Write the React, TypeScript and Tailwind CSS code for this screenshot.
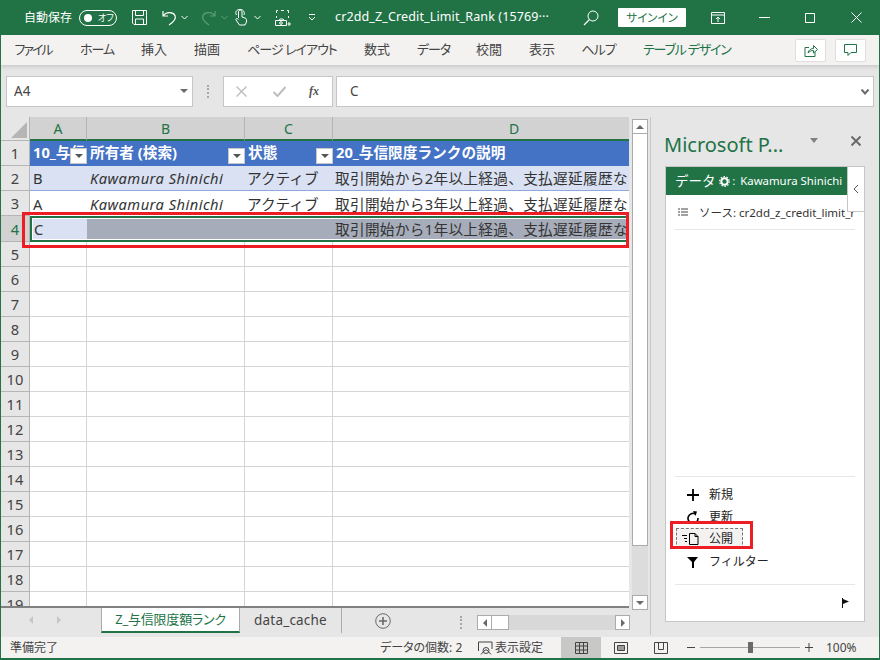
import React from "react";

const jp = "font-['Noto_Sans','Noto_Sans_CJK_JP',sans-serif]";
const palt = "[font-feature-settings:'palt']";

function Ico({ w = 16, h = 16, vb, className = "", children }: { w?: number; h?: number; vb?: string; className?: string; children: React.ReactNode }) {
  return (
    <svg width={w} height={h} viewBox={vb ?? `0 0 ${w} ${h}`} fill="none" stroke="currentColor" strokeWidth={1} className={`shrink-0 ${className}`}>
      {children}
    </svg>
  );
}

const Chev = ({ className = "" }: { className?: string }) => (
  <Ico w={7} h={5} className={className}>
    <path d="M0.5 1 L3.5 4 L6.5 1" />
  </Ico>
);

function TitleBar() {
  return (
    <div className="h-[35px] bg-[#217346] text-white flex items-center shrink-0 text-[12px]">
      <span className="ml-[24px] w-[48px] whitespace-nowrap">自動保存</span>
      <div className="ml-[7px] w-[38px] h-[16px] rounded-full border border-white flex items-center">
        <span className="ml-[4px] w-[8px] h-[8px] rounded-full bg-white" />
        <span className={`ml-[6px] text-[9px] leading-none whitespace-nowrap ${palt}`}>オフ</span>
      </div>
      <Ico w={17} h={17} className="ml-[14px]">
        <path d="M1.5 1.5 H15.5 V15.5 H3 L1.5 14 Z M4.5 1.5 V6.5 H12.5 V1.5 M4.5 15.5 V10 H12.5 V15.5" />
      </Ico>
      <Ico w={17} h={17} className="ml-[13px]">
        <path d="M2 2 V7 H7 M2 7 C5 2.5 12 2.5 14 6.5 C15.5 10 12.5 13 8 16" strokeWidth={1.2} />
      </Ico>
      <Chev className="ml-[3px]" />
      <Ico w={17} h={17} className="ml-[12px] text-[#5c9d7d]">
        <path d="M15 2 V7 H10 M15 7 C12 2.5 5 2.5 3 6.5 C1.5 10 4.5 13 9 16" strokeWidth={1.2} />
      </Ico>
      <Chev className="ml-[4px] text-[#5c9d7d]" />
      <Ico w={13} h={17} className="ml-[6px]">
        <path d="M4.5 9 V3 C4.5 0.5 8 0.5 8 3 V8 L11 9 C12.5 9.5 12.5 10.5 12.5 12 V13 L11 16 H5.5 L2 11 C1.5 9.5 3 9 4.5 10.5 M2.5 6 C0.5 2.5 3 0.5 6 0.5 C9 0.5 11 2.5 10 6" />
      </Ico>
      <Chev className="ml-[7px]" />
      <Ico w={17} h={18} className="ml-[13px]">
        <path d="M4 1.5 H2.5 V4 M7 1.5 H10 M13 1.5 H14.5 V4 M14.5 7 V9 M2.5 7 V9 M1.5 11.5 H12.5 V16.5 H1.5 Z M5 11.5 L6 10 H9 L10 11.5 M13.5 15 H17 M15 13 V17" />
        <circle cx="7" cy="14" r="1.3" />
      </Ico>
      <Ico w={8} h={7} className="ml-[17px]">
        <path d="M1 0.5 H7 M1 3 L4 6 L7 3" />
      </Ico>
      <span className={`ml-[19px] w-[219px] whitespace-nowrap text-[12.5px] tracking-[0.13px] ${jp}`}>cr2dd_Z_Credit_Limit_Rank (15769···</span>
      <Ico w={16} h={16} className="ml-[29px]">
        <circle cx="10" cy="6" r="5" />
        <path d="M6.5 9.5 L1 15" strokeWidth={1.3} />
      </Ico>
      <div className={`ml-[19px] w-[68px] h-[19px] bg-white text-[#217346] rounded-[1px] flex items-center justify-center text-[11.5px] ${palt}`}>サインイン</div>
      <Ico w={14} h={12} className="ml-[25px]">
        <path d="M0.5 0.5 H13.5 V11.5 H0.5 Z M0.5 3 H13.5 M7 10 V5 M5 7 L7 5 L9 7" />
      </Ico>
      <Ico w={11} h={1} className="ml-[34px]">
        <path d="M0 0.5 H11" />
      </Ico>
      <Ico w={10} h={10} className="ml-[35px]">
        <path d="M0.5 0.5 H9.5 V9.5 H0.5 Z" />
      </Ico>
      <Ico w={11} h={11} className="ml-[36px]">
        <path d="M0.5 0.5 L10.5 10.5 M10.5 0.5 L0.5 10.5" />
      </Ico>
    </div>
  );
}

function RibbonTabs() {
  const tabs: [string, number, number, string][] = [
    ["ファイル", 14, 38, "tracking-[-2px]"],
    ["ホーム", 80, 34, "tracking-[-1px]"],
    ["挿入", 141, 26, ""],
    ["描画", 194, 26, ""],
    ["ページ レイアウト", 249, 86, "tracking-[-1px]"],
    ["数式", 364, 26, ""],
    ["データ", 417, 33, "tracking-[-1px]"],
    ["校閲", 476, 26, ""],
    ["表示", 529, 26, ""],
    ["ヘルプ", 582, 33, "tracking-[-1px]"],
  ];
  let x = 0;
  return (
    <div className={`h-[30px] bg-[#f3f2f1] flex items-center shrink-0 text-[13px] text-[#444444] shadow-[0_2px_4px_rgba(0,0,0,0.12)] relative z-10 ${palt}`}>
      {tabs.map(([t, l, w, tr]) => {
        const m = l - x;
        x = l + w;
        return (
          <span key={t} className={`whitespace-nowrap flex justify-center ${tr}`} style={{ marginLeft: m, width: w }}>
            {t}
          </span>
        );
      })}
      <span className="ml-[28px] w-[88px] whitespace-nowrap text-[#217346] tracking-[-1.2px]">テーブル デザイン</span>
      <div className="ml-[64px] w-[31px] h-[23px] bg-white border border-[#e1dfdd] rounded-[2px] flex items-center justify-center text-[#217346]">
        <Ico w={14} h={13}>
          <path d="M5 3.5 H1 V12.5 H11 V8 M4 9 C4.5 6 7 4.5 9.5 4.5 V1.5 L13.5 5.5 L9.5 9 V6.5 C7 6.5 5.5 7.5 4 9 Z" />
        </Ico>
      </div>
      <div className="ml-[9px] w-[31px] h-[23px] bg-white border border-[#e1dfdd] rounded-[2px] flex items-center justify-center text-[#217346]">
        <Ico w={13} h={12}>
          <path d="M0.5 0.5 H12.5 V8.5 H7 L4 11.5 V8.5 H0.5 Z" />
        </Ico>
      </div>
    </div>
  );
}

function FormulaBar() {
  return (
    <div className="h-[52px] flex shrink-0 items-start pt-[11px] pl-[5px] bg-[#e6e6e6]">
      <div className="w-[187px] h-[31px] bg-white border border-[#c6c6c6] flex items-center pl-[7px] text-[13.5px] text-[#444444] relative">
        A4
        <span className="absolute right-[4px] top-[12px] w-0 h-0 border-x-[4px] border-x-transparent border-t-[4px] border-t-[#6a6a6a]" />
      </div>
      <div className="w-[2px] h-[13px] mt-[9px] ml-[14px] border-l-2 border-dotted border-[#a6a6a6]" />
      <div className="ml-[14px] w-[110px] h-[31px] bg-white border border-[#c6c6c6] flex items-center text-[#bdbdbd]">
        <Ico w={11} h={11} className="ml-[12px]">
          <path d="M0.5 0.5 L10.5 10.5 M10.5 0.5 L0.5 10.5" strokeWidth={1.4} />
        </Ico>
        <Ico w={13} h={11} className="ml-[26px]">
          <path d="M0.5 6 L4.5 10 L12.5 1" strokeWidth={2} />
        </Ico>
        <span className="ml-[23px] -mt-[2px] text-[#555555] italic font-bold text-[12px] font-['Liberation_Serif',serif] leading-none">fx</span>
      </div>
      <div className="ml-[3px] w-[538px] h-[31px] bg-white border border-[#c6c6c6] flex items-center pl-[13px] text-[13.5px] text-[#444444] relative">
        C
        <Ico w={8} h={6} className="absolute right-[4px] top-[12px] text-[#6a6a6a]">
          <path d="M0.5 0.5 L4 4.5 L7.5 0.5" strokeWidth={2} />
        </Ico>
      </div>
    </div>
  );
}

const colW = ["w-[57px]", "w-[158px]", "w-[88px]", "w-[363px]"];
const colHead = ["A", "B", "C", "D"];

function Filter() {
  return (
    <span className="absolute right-[0px] bottom-[2px] w-[17px] h-[16px] bg-white border border-[#c6c6c6] flex items-center justify-center">
      <span className="w-0 h-0 border-x-[4px] border-x-transparent border-t-[4px] border-t-[#555555]" />
    </span>
  );
}

function Cell({ i, className = "", children, filter }: { i: number; className?: string; children?: React.ReactNode; filter?: boolean }) {
  return (
    <div className={`${colW[i]} shrink-0 h-full relative overflow-hidden whitespace-nowrap flex items-center pl-[3px] ${className}`}>
      {children}
      {filter && <Filter />}
    </div>
  );
}

function RowHead({ n, active }: { n: number; active?: boolean }) {
  return (
    <div className={`w-[29px] shrink-0 h-full flex items-center justify-center border-b border-r border-[#b5b5b5] text-[14.67px] ${active ? "bg-[#d2d2d2] text-[#217346]" : "bg-[#e6e6e6] text-[#444444]"}`}>
      {n}
    </div>
  );
}

const line = "border-r border-b border-[#d4d4d4]";
const desc = (n: number) => `取引開始から${n}年以上経過、支払遅延履歴なし`;
const Owner = () => <span className="italic tracking-[0.47px]">Kawamura Shinichi</span>;
const Desc = ({ n }: { n: number }) => <span className="tracking-[0.3px] -ml-px">{desc(n)}</span>;
const Status = () => <span className="-ml-px">アクティブ</span>;
const Head = ({ children }: { children: React.ReactNode }) => <span className="-mt-[3px]">{children}</span>;

function Sheet() {
  const empties = [5, 6, 7, 8, 9, 10, 11, 12, 13, 14, 15, 16, 17, 18, 19];
  return (
    <div className={`w-[628px] h-[491px] overflow-hidden shrink-0 border-b-2 border-[#808080] relative text-[14.67px] text-[#333333] ${jp}`}>
      <div className="h-[24px] flex">
        <div className="w-[29px] shrink-0 bg-[#e6e6e6] border-r border-b border-[#b5b5b5] flex items-end justify-end p-[2px]">
          <Ico w={16} h={16} className="text-[#b5b5b5]">
            <path d="M16 0 V16 H0 Z" fill="currentColor" stroke="none" />
          </Ico>
        </div>
        {colHead.map((c, i) => (
          <div key={c} className={`${colW[i]} shrink-0 bg-[#d2d2d2] border-r border-[#b5b5b5] border-b-2 border-b-[#217346] flex items-center justify-center text-[#217346] text-[14px]`}>
            {c}
          </div>
        ))}
      </div>
      <div className="h-[25px] flex">
        <RowHead n={1} />
        <div className="flex h-full bg-[#4472c4] text-white font-bold">
          <Cell i={0} filter><Head>10_与信</Head></Cell>
          <Cell i={1} filter><Head>所有者 (検索)</Head></Cell>
          <Cell i={2} filter><Head>状態</Head></Cell>
          <Cell i={3}><Head>20_与信限度ランクの説明</Head></Cell>
        </div>
      </div>
      <div className="h-[25px] flex">
        <RowHead n={2} />
        <div className="flex h-full bg-[#d9e1f2] border-b border-[#8ea9db]">
          <Cell i={0}>B</Cell>
          <Cell i={1}><Owner /></Cell>
          <Cell i={2}><Status /></Cell>
          <Cell i={3}><Desc n={2} /></Cell>
        </div>
      </div>
      <div className="h-[25px] flex">
        <RowHead n={3} />
        <div className="flex h-full bg-white">
          <Cell i={0}>A</Cell>
          <Cell i={1}><Owner /></Cell>
          <Cell i={2}><Status /></Cell>
          <Cell i={3}><Desc n={3} /></Cell>
        </div>
      </div>
      <div className="h-[26px] flex">
        <RowHead n={4} active />
        <div className="flex h-full bg-white border-2 border-[#217346] p-[1px] w-[640px] shrink-0">
          <div className="flex h-full w-full overflow-hidden bg-[#a6acb9]">
            <div className="w-[54px] shrink-0 bg-[#d9e1f2] flex items-center pl-[1px] -mt-px">C</div>
            <div className="w-[246px] shrink-0" />
            <div className="flex-1 whitespace-nowrap flex items-center pl-[3px] -mt-px"><Desc n={1} /></div>
          </div>
        </div>
      </div>
      {empties.map((n) => (
        <div key={n} className="h-[25px] flex bg-white">
          <RowHead n={n} />
          {[0, 1, 2, 3].map((i) => (
            <div key={i} className={`${colW[i]} shrink-0 ${line}`} />
          ))}
        </div>
      ))}
      <div className="absolute left-[21px] top-[95px] w-[607px] h-[36px] border-[3px] border-[#ee1c25]" />
    </div>
  );
}

function VScroll() {
  return (
    <div className="w-[16px] ml-[3px] mt-[2px] flex flex-col bg-[#dcdcdc] h-[491px]">
      <div className="h-[15px] bg-white border border-[#ababab] flex items-center justify-center">
        <span className="w-0 h-0 border-x-[4px] border-x-transparent border-b-[4px] border-b-[#6a6a6a]" />
      </div>
      <div className="h-[412px] bg-white border-x border-b border-[#ababab]" />
      <div className="flex-1" />
      <div className="h-[15px] bg-white border border-[#ababab] flex items-center justify-center">
        <span className="w-0 h-0 border-x-[4px] border-x-transparent border-t-[4px] border-t-[#6a6a6a]" />
      </div>
    </div>
  );
}

function SheetTabs() {
  return (
    <div className={`h-[29px] flex items-start shrink-0 text-[13.5px] ${jp}`}>
      <div className="w-[100px] h-[24px] flex items-center">
        <span className="ml-[28px] w-0 h-0 border-y-[4px] border-y-transparent border-r-[4px] border-r-[#c6c6c6]" />
        <span className="ml-[24px] w-0 h-0 border-y-[4px] border-y-transparent border-l-[4px] border-l-[#c6c6c6]" />
      </div>
      <div className={`w-[139px] h-[25px] bg-white border-x border-[#ababab] border-b-[2px] border-b-[#217346] text-[#217346] flex items-center justify-center whitespace-nowrap text-[13px] tracking-[-0.2px] ${palt}`}>
        Z_与信限度額ランク
      </div>
      <div className="w-[102px] h-[25px] border-r border-[#ababab] flex items-center justify-center text-[#444444] tracking-[0.2px]">data_cache</div>
      <Ico w={16} h={16} className="ml-[33px] mt-[5px] text-[#6a6a6a]">
        <circle cx="8" cy="8" r="7.3" />
        <path d="M8 4 V12 M4 8 H12" strokeWidth={1.6} />
      </Ico>
      <div className="w-[2px] h-[13px] mt-[8px] ml-[69px] border-l-2 border-dotted border-[#a6a6a6]" />
      <div className="ml-[15px] mt-[7px] w-[153px] h-[15px] bg-[#d8d8d8] flex">
        <div className="w-[15px] bg-white border border-[#ababab] flex items-center justify-center">
          <span className="w-0 h-0 border-y-[4px] border-y-transparent border-r-[4px] border-r-[#6a6a6a]" />
        </div>
        <div className="w-[17px] bg-white border-y border-r border-[#ababab]" />
        <div className="flex-1" />
        <div className="w-[15px] bg-white border border-[#ababab] flex items-center justify-center">
          <span className="w-0 h-0 border-y-[4px] border-y-transparent border-l-[4px] border-l-[#6a6a6a]" />
        </div>
      </div>
    </div>
  );
}

function Action({ icon, label, className = "" }: { icon: React.ReactNode; label: string; className?: string }) {
  return (
    <div className={`h-[22px] flex items-center text-[12px] text-[#222222] ${className}`}>
      <div className="w-[33px] flex justify-end pr-[9px] items-center">{icon}</div>
      <span className="ml-[1px] whitespace-nowrap">{label}</span>
    </div>
  );
}

function Pane() {
  return (
    <div className={`w-[230px] border-l border-[#c6c6c6] mt-0 h-[518px] pl-[14px] flex flex-col ${jp}`}>
      <div className="h-[49px] flex items-center text-[#217346] relative">
        <span className="text-[20px] whitespace-nowrap mt-[6px] -ml-px">Microsoft P...</span>
        <span className="absolute left-[145px] top-[21px] w-0 h-0 border-x-[4.5px] border-x-transparent border-t-[5px] border-t-[#808080]" />
        <Ico w={10} h={10} className="absolute left-[186px] top-[19px] text-[#6a6a6a]">
          <path d="M0.5 0.5 L9.5 9.5 M9.5 0.5 L0.5 9.5" strokeWidth={2} />
        </Ico>
      </div>
      <div className="w-[200px] h-[456px] bg-white border border-[#c6c6c6] flex flex-col relative">
        <div className="h-[28px] w-[182px] bg-[#217346] text-white flex items-center shrink-0 pl-[9px] overflow-hidden">
          <span className="text-[13.5px] whitespace-nowrap">データ</span>
          <svg width="11" height="11" viewBox="0 0 11 11" className="ml-[3px] shrink-0">
            <circle cx="5.5" cy="5.5" r="3.2" fill="none" stroke="white" strokeWidth="2" />
            <circle cx="5.5" cy="5.5" r="4.8" fill="none" stroke="white" strokeWidth="1.2" strokeDasharray="1.5 1.5" />
          </svg>
          <span className="ml-[3px] text-[10px] leading-none">:</span>
          <span className="ml-[5px] text-[11.4px] whitespace-nowrap">Kawamura Shinichi</span>
        </div>
        <div className="absolute right-0 top-0 w-[17px] h-[45px] bg-white border-l border-b border-[#c6c6c6] flex items-center justify-center text-[#555555]">
          <Ico w={6} h={10}>
            <path d="M5 1 L1 5 L5 9" />
          </Ico>
        </div>
        <div className="mx-[9px] h-[35px] flex items-center border-b border-[#e6e6e6] overflow-hidden whitespace-nowrap text-[11.5px] text-[#333333]">
          <Ico w={10} h={8} className="ml-[3px] text-[#444444]">
            <path d="M0 1 H2 M3 1 H10 M0 4 H2 M3 4 H10 M0 7 H2 M3 7 H10" />
          </Ico>
          <span className="ml-[11px] mt-[2px]">ソース: cr2dd_z_credit_limit_r</span>
        </div>
        <div className="flex-1" />
        <div className="mx-[9px] border-t border-[#e6e6e6] pt-[7px] h-[108px]">
          <Action
            label="新規"
            icon={
              <Ico w={12} h={12} className="text-black">
                <path d="M6 0 V12 M0 6 H12" strokeWidth={1.8} />
              </Ico>
            }
          />
          <Action
            label="更新"
            icon={
              <Ico w={12} h={13} className="text-black">
                <path d="M8.5 3 A5 5 0 1 0 11 7" strokeWidth={1.6} />
                <path d="M6 0 L10 0.5 L8.5 5 Z" fill="currentColor" stroke="none" />
              </Ico>
            }
          />
          <div className="relative">
            <div className="absolute left-[1px] top-0 w-[67px] h-[21px] bg-[#f3f2f1] border border-dashed border-[#777777]" />
            <div className="relative">
              <Action
                label="公開"
                icon={
                  <Ico w={18} h={12} className="text-black">
                    <path d="M8.5 0.5 H14 L17 3.5 V11.5 H8.5 Z M14 0.5 V3.5 H17 M1 2.5 H6 M3 5.5 H6 M4 8.5 H6" />
                  </Ico>
                }
              />
            </div>
          </div>
          <Action
            className="mt-[1px]"
            label="フィルター"
            icon={
              <Ico w={12} h={11} className="text-black">
                <path d="M0 0 H11 L7 5 V11 H5 V5 Z" fill="currentColor" stroke="none" />
              </Ico>
            }
          />
        </div>
        <div className="mx-[9px] border-t border-[#e6e6e6] h-[37px] flex items-center justify-end pr-[6px]">
          <svg width="7" height="10" viewBox="0 0 7 10">
            <path d="M0.5 0 V10" stroke="#111111" />
            <path d="M1 1 L7 3.5 L1 6 Z" fill="#111111" />
          </svg>
        </div>
        <div className="absolute left-[4px] top-[354px] w-[83px] h-[28px] border-[3px] border-[#ee1c25]" />
      </div>
    </div>
  );
}

function StatusBar() {
  return (
    <div className={`h-[21px] bg-[#f3f2f1] flex items-center shrink-0 text-[12px] text-[#444444] ${jp}`}>
      <span className="ml-[9px] w-[48px] whitespace-nowrap">準備完了</span>
      <span className={`ml-[322px] w-[78px] whitespace-nowrap ${palt}`}>データの個数: 2</span>
      <Ico w={15} h={14} className="ml-[20px] text-[#444444]">
        <path d="M0.5 10 V1 H14 V8 M3 13.5 L7 9 H9 L13 13.5" />
        <circle cx="8" cy="9.5" r="3" />
      </Ico>
      <span className="ml-[2px] w-[48px] whitespace-nowrap">表示設定</span>
      <div className="ml-[18px] w-[40px] h-full bg-[#c8c8c6] flex items-center justify-center">
        <Ico w={13} h={12}>
          <path d="M0.5 0.5 H12.5 V11.5 H0.5 Z M0.5 4 H12.5 M0.5 8 H12.5 M4.5 0.5 V11.5 M8.5 0.5 V11.5" />
        </Ico>
      </div>
      <Ico w={14} h={12} className="ml-[13px]">
        <path d="M0.5 0.5 H13.5 V11.5 H0.5 Z M3.5 3.5 H10.5 V8.5 H3.5 Z M4 5 H10 M4 7 H10" />
      </Ico>
      <Ico w={14} h={12} className="ml-[26px]">
        <path d="M0.5 0.5 H13.5 V11.5 H0.5 Z M4.5 0.5 V7.5 H9.5 V0.5" />
      </Ico>
      <span className="ml-[19px] w-[8px] h-[1px] bg-[#444444]" />
      <div className="ml-[5px] w-[100px] h-[1px] bg-[#a6a6a6] relative">
        <span className="absolute left-[48px] -top-[5px] w-[5px] h-[11px] bg-[#6a6a6a]" />
      </div>
      <Ico w={8} h={9} className="ml-[5px]">
        <path d="M4 0 V9 M0 4.5 H8" />
      </Ico>
      <span className="ml-[13px] whitespace-nowrap">100%</span>
    </div>
  );
}

export default function App() {
  return (
    <div className={`w-[880px] h-[660px] bg-[#e6e6e6] border-x border-b-2 border-[#217346] flex flex-col overflow-hidden ${jp}`}>
      <div className="-mx-px">
        <TitleBar />
        <RibbonTabs />
      </div>
      <FormulaBar />
      <div className="flex h-[520px] shrink-0">
        <div className="w-[649px] flex flex-col shrink-0">
          <div className="flex h-[491px] shrink-0">
            <Sheet />
            <VScroll />
          </div>
          <SheetTabs />
        </div>
        <Pane />
      </div>
      <StatusBar />
    </div>
  );
}
